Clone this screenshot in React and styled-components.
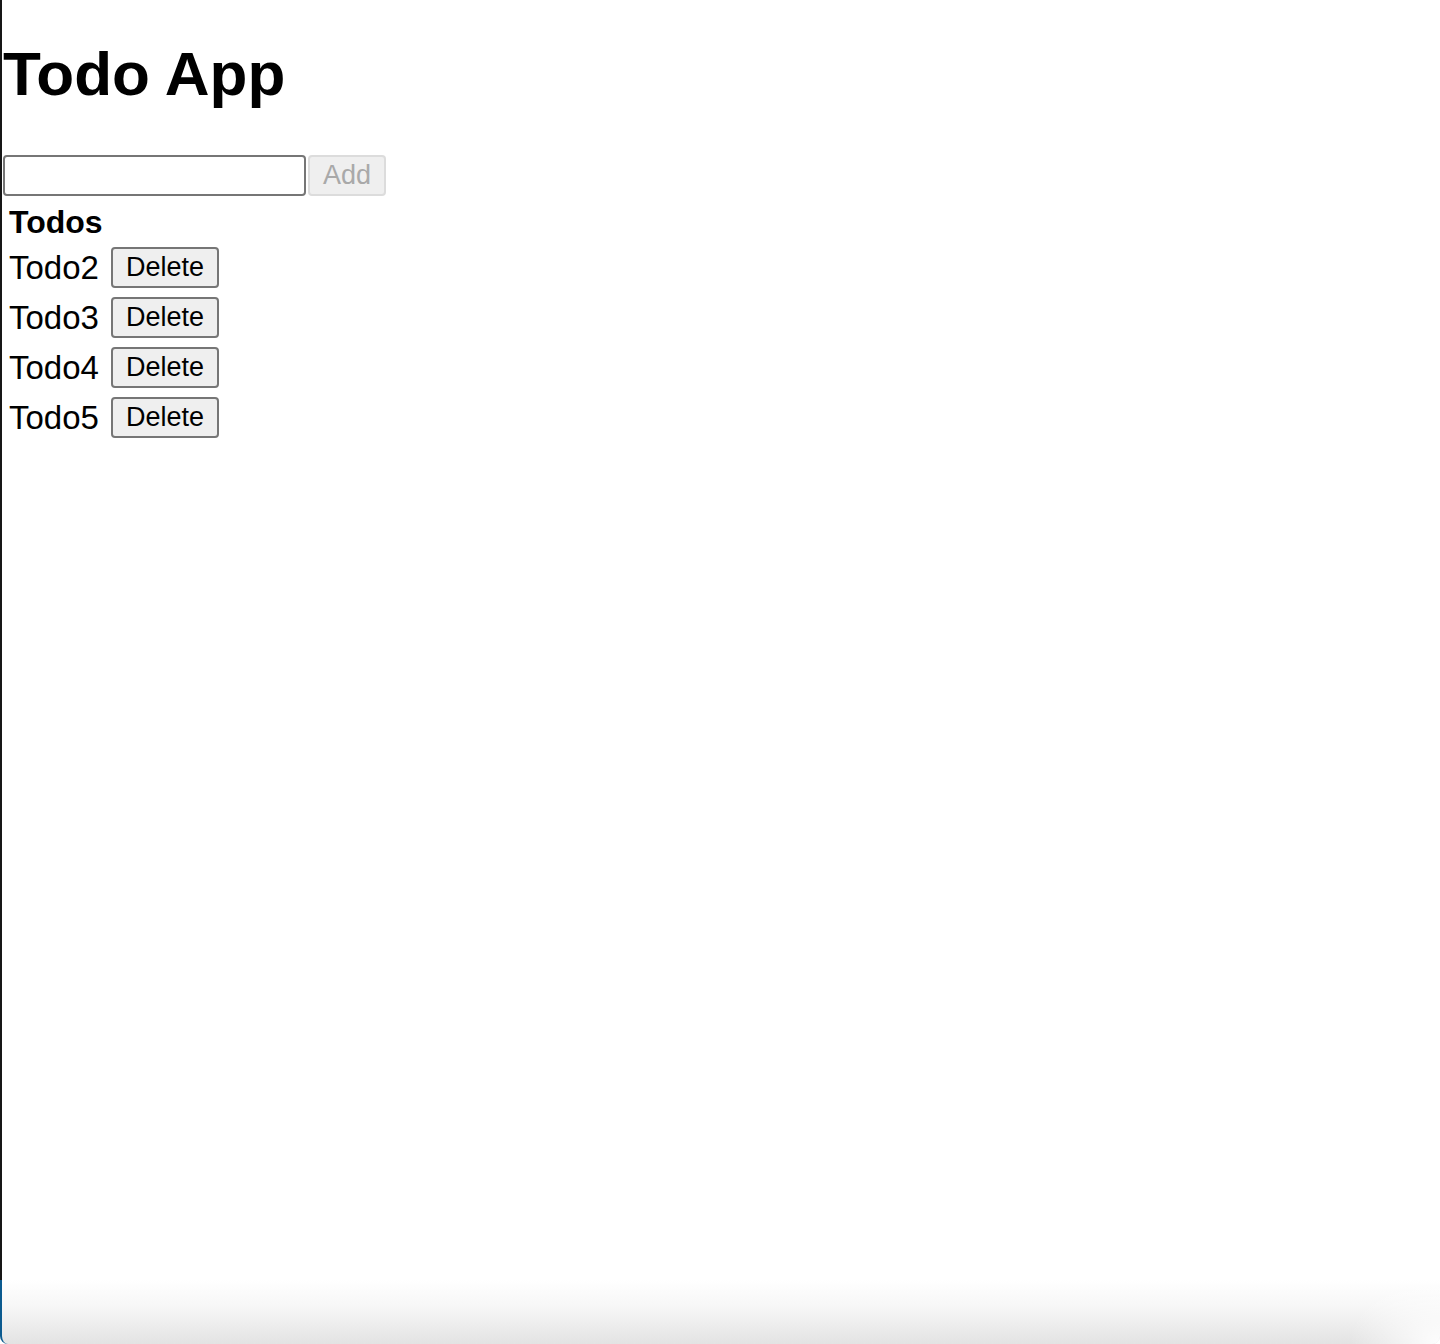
import React, { useState } from "react";
import styled, { createGlobalStyle } from "styled-components";

const GlobalStyle = createGlobalStyle`
  html, body {
    margin: 0;
    padding: 0;
    background: #fff;
  }
  body {
    font-family: "Liberation Sans", Arial, sans-serif;
    color: #000;
  }
`;

const Window = styled.div`
  min-height: 1344px;
  display: flex;
  flex-direction: column;
  background: #fff;
`;

const Main = styled.main`
  flex: 1;
  display: flex;
  flex-direction: column;
  border-left: 2px solid #161616;
  padding-left: 1px;
`;

const Title = styled.h1`
  margin: 44px 0 0;
  font-size: 62px;
  line-height: 60px;
  font-weight: 700;
`;

const Form = styled.form`
  display: flex;
  gap: 2px;
  margin-top: 51px;
`;

const TextInput = styled.input`
  box-sizing: border-box;
  width: 303px;
  height: 41px;
  border: 2px solid #767676;
  border-radius: 4px;
  font-size: 26px;
  font-family: inherit;
  padding: 0 6px;
  outline: none;
`;

const Button = styled.button`
  box-sizing: border-box;
  height: 41px;
  padding: 0 13px;
  font-family: inherit;
  font-size: 27px;
  border-radius: 4px;
  background: #efefef;
  color: ${(p) => (p.disabled ? "#a9a9a9" : "#000")};
  border: 2px solid ${(p) => (p.disabled ? "#dcdcdc" : "#767676")};
`;

const List = styled.section`
  display: flex;
  flex-direction: column;
  gap: 9px;
  padding-left: 6px;
  margin-top: 8px;
`;

const ListTitle = styled.h2`
  margin: 0 0 -2px;
  font-size: 32px;
  line-height: 36px;
  font-weight: 700;
`;

const Row = styled.div`
  display: flex;
  align-items: center;
  gap: 12px;
  font-size: 33px;
  line-height: 41px;
`;

const Shade = styled.div`
  height: 64px;
  border-left: 2px solid #0b5a8f;
  border-bottom-left-radius: 8px;
  border-bottom-right-radius: 8px;
  background:
    radial-gradient(ellipse 90px 70px at 100% 100%, rgba(255,255,255,0.95), rgba(255,255,255,0) 100%),
    linear-gradient(to bottom, #ffffff 0%, #f7f7f7 40%, #e3e3e3 100%);
`;

const App = () => {
  const [text, setText] = useState("");
  const [todos, setTodos] = useState(["Todo2", "Todo3", "Todo4", "Todo5"]);

  const add = (e) => {
    e.preventDefault();
    if (!text.trim()) return;
    setTodos([...todos, text]);
    setText("");
  };

  return (
    <>
      <GlobalStyle />
      <Window>
        <Main>
          <Title>Todo App</Title>
          <Form onSubmit={add}>
            <TextInput value={text} onChange={(e) => setText(e.target.value)} />
            <Button type="submit" disabled={!text.trim()}>
              Add
            </Button>
          </Form>
          <List>
            <ListTitle>Todos</ListTitle>
            {todos.map((t, i) => (
              <Row key={t + i}>
                {t}
                <Button onClick={() => setTodos(todos.filter((_, j) => j !== i))}>
                  Delete
                </Button>
              </Row>
            ))}
          </List>
        </Main>
        <Shade />
      </Window>
    </>
  );
};

export default App;
